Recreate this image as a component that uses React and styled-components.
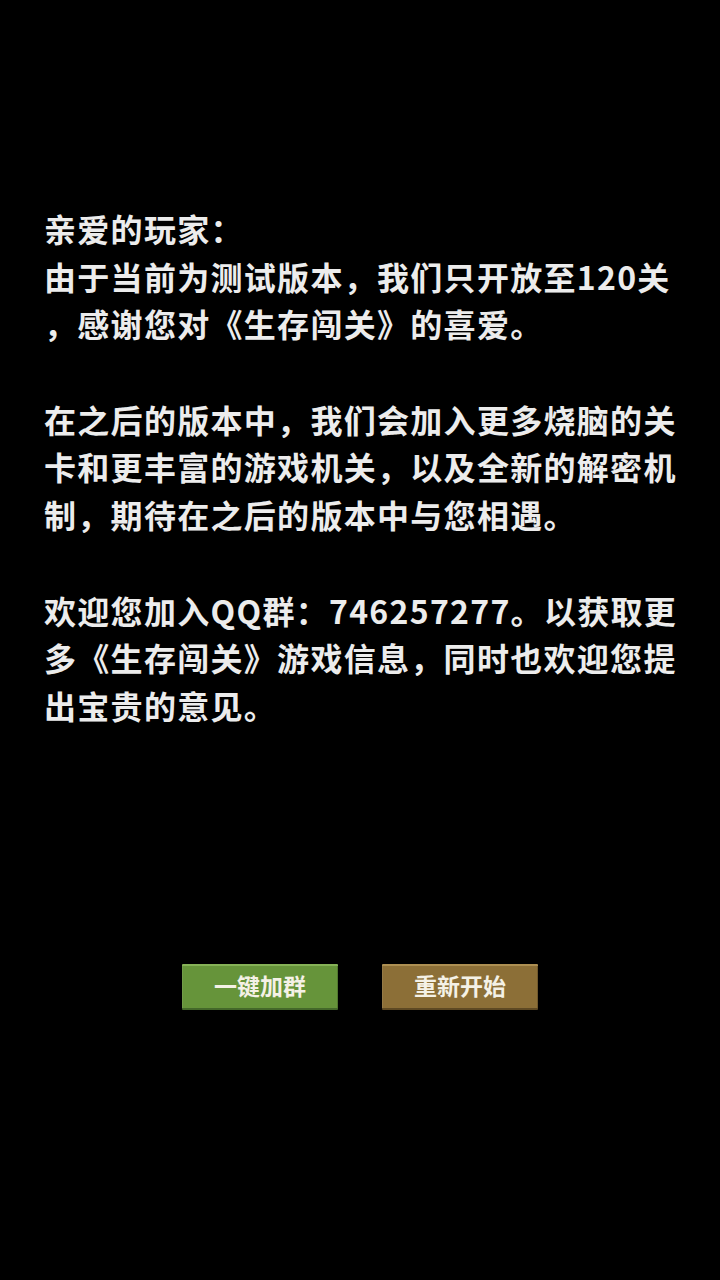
import React from 'react'
import styled, { createGlobalStyle } from 'styled-components'

const GlobalStyle = createGlobalStyle`
  html, body {
    margin: 0;
    padding: 0;
    background: #000;
  }
  body {
    font-family: "Noto Sans CJK SC", "Noto Sans", sans-serif;
  }
`

const paragraphs = [
  ['亲爱的玩家：', '由于当前为测试版本，我们只开放至120关', '，感谢您对《生存闯关》的喜爱。'],
  ['在之后的版本中，我们会加入更多烧脑的关', '卡和更丰富的游戏机关，以及全新的解密机', '制，期待在之后的版本中与您相遇。'],
  ['欢迎您加入QQ群：746257277。以获取更', '多《生存闯关》游戏信息，同时也欢迎您提', '出宝贵的意见。'],
]

const App = () => {
  return (
    <Page>
      <GlobalStyle />
      <Letter>
        {paragraphs.map((lines, i) => (
          <Paragraph key={i}>
            {lines.map((line) => (
              <Line key={line}>{line}</Line>
            ))}
          </Paragraph>
        ))}
      </Letter>
      <Actions>
        <Button $tone="green">一键加群</Button>
        <Button $tone="brown">重新开始</Button>
      </Actions>
    </Page>
  )
}

const tones = {
  green: { bg: '#66943a', top: '#86b257', bottom: '#44682a' },
  brown: { bg: '#8c6f37', top: '#ad8f52', bottom: '#5e4923' },
}

const Page = styled.main`
  width: 720px;
  height: 1280px;
  background: #000;
  display: flex;
  flex-direction: column;
  padding-top: 205px;
  box-sizing: border-box;
`

const Letter = styled.section`
  padding: 0 30px 0 44px;
  display: flex;
  flex-direction: column;
  gap: 47.7px;
`

const Paragraph = styled.div`
  display: flex;
  flex-direction: column;
`

const Line = styled.div`
  color: #ececec;
  font-size: 32px;
  font-weight: 700;
  line-height: 47.7px;
  height: 47.7px;
  white-space: nowrap;
  letter-spacing: 1.3px;
`

const Actions = styled.div`
  margin-top: 234px;
  display: flex;
  justify-content: center;
  gap: 44px;
`

const Button = styled.button`
  width: 156px;
  height: 46px;
  border: none;
  border-top: 2px solid ${(p) => tones[p.$tone].top};
  border-bottom: 2px solid ${(p) => tones[p.$tone].bottom};
  background: ${(p) => tones[p.$tone].bg};
  box-shadow: inset 1px 0 0 rgba(255, 255, 255, 0.08), inset -1px 0 0 rgba(0, 0, 0, 0.2);
  color: #f4f1e6;
  font-family: "Noto Sans CJK SC", sans-serif;
  font-size: 23px;
  font-weight: 700;
  line-height: 1;
  padding: 0 0 3px;
  border-radius: 1px;
  cursor: pointer;
`

export default App
